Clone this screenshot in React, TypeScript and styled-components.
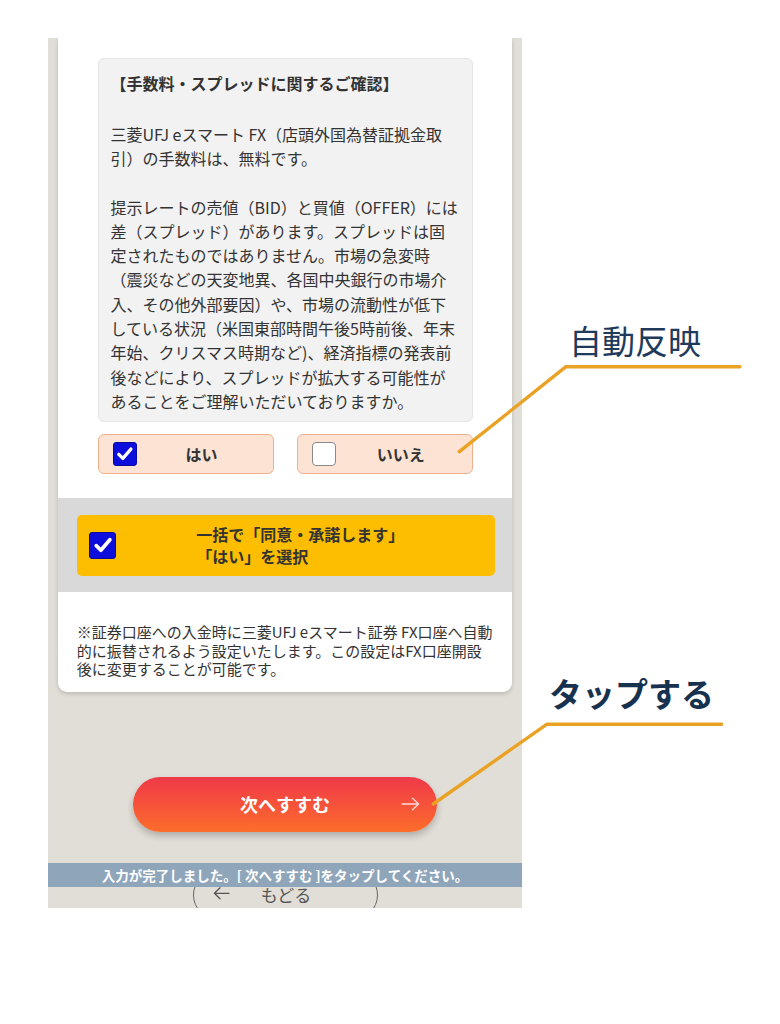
import React from "react";
import styled, { createGlobalStyle } from "styled-components";

const Global = createGlobalStyle`
  html, body { margin: 0; padding: 0; background: #ffffff; }
  body { font-family: "Noto Sans CJK JP", "Noto Sans", sans-serif; color: #333; }
  * { box-sizing: border-box; }
`;

const Page = styled.div`
  position: relative;
  width: 780px;
  height: 1024px;
  overflow: hidden;
  background: #ffffff;
  padding: 38px 0 0 48px;
`;

const Phone = styled.div`
  position: relative;
  width: 474px;
  height: 870px;
  overflow: hidden;
  background: #e1ddd7;
  display: flex;
  flex-direction: column;
  align-items: center;
  & > * { flex-shrink: 0; }
`;

const Card = styled.div`
  align-self: stretch;
  margin: 0 10px;
  background: #ffffff;
  border-radius: 0 0 9px 9px;
  box-shadow: 0 2px 4px rgba(0, 0, 0, 0.16);
  display: flex;
  flex-direction: column;
`;

const CardTop = styled.div`
  padding: 20px 39px 24px 39.5px;
  display: flex;
  flex-direction: column;
`;

const InfoBox = styled.div`
  background: #f2f2f2;
  border: 1px solid #e6e6e6;
  border-radius: 6px;
  padding: 12px 12px 8px 12px;
  font-size: 16px;
  line-height: 24.3px;
  color: #333;
  white-space: nowrap;
`;

const InfoTitle = styled.div`
  font-weight: 700;
  margin-bottom: 26.4px;
`;

const InfoText = styled.div``;

const Blank = styled.div`
  height: 24.3px;
`;

const ChoiceRow = styled.div`
  margin-top: 12px;
  display: flex;
  gap: 23px;
`;

const Choice = styled.div`
  flex: 1;
  height: 40px;
  background: #fde3d4;
  border: 1px solid #efb18c;
  border-radius: 6px;
  display: flex;
  align-items: center;
  padding: 0 6px 0 14px;
`;

const ChoiceLabel = styled.span`
  flex: 1;
  text-align: center;
  font-size: 16px;
  font-weight: 700;
  color: #333;
`;

const Box = styled.span<{ $checked: boolean; $size: number }>`
  flex: none;
  width: ${(p) => p.$size}px;
  height: ${(p) => p.$size}px;
  border-radius: ${(p) => (p.$checked ? 3 : 4)}px;
  background: ${(p) => (p.$checked ? "#0d0ddc" : "#ffffff")};
  border: ${(p) => (p.$checked ? "1px solid #0a0a9a" : "1.5px solid #8a8a8a")};
  display: flex;
  align-items: center;
  justify-content: center;
`;

const Check = ({ checked, size }: { checked: boolean; size: number }) => (
  <Box $checked={checked} $size={size}>
    {checked && (
      <svg width={size * 0.82} height={size * 0.82} viewBox="0 0 24 24">
        <path
          d="M4.6 12.6 L9.6 17.6 L19.4 6.2"
          fill="none"
          stroke="#ffffff"
          strokeWidth="4"
          strokeLinecap="round"
          strokeLinejoin="round"
        />
      </svg>
    )}
  </Box>
);

const BulkBand = styled.div`
  background: #d9d9d9;
  padding: 16.7px 17px 16.7px 18.7px;
`;

const BulkBox = styled.div`
  height: 60.6px;
  background: #fdbd00;
  border-radius: 5px;
  display: flex;
  align-items: center;
  padding-left: 12.6px;
`;

const BulkText = styled.div`
  margin-left: 80px;
  font-size: 16px;
  font-weight: 700;
  line-height: 22.7px;
  color: #333;
`;

const Note = styled.div`
  padding: 31px 18px 14px 18.7px;
  font-size: 15px;
  line-height: 18.3px;
  color: #333;
  white-space: nowrap;
`;

const NextButton = styled.div`
  position: relative;
  margin-top: 85px;
  width: 304px;
  height: 54.5px;
  border-radius: 28px;
  background: linear-gradient(180deg, #ef3949 0%, #f6523a 50%, #fd6d2a 100%);
  box-shadow: 0 4px 7px rgba(0, 0, 0, 0.22);
  display: flex;
  align-items: center;
  justify-content: center;
  color: #ffffff;
  font-size: 18px;
  font-weight: 700;
`;

const NextArrow = styled.span`
  position: absolute;
  right: 17px;
  top: 50%;
  transform: translateY(-50%);
  display: flex;
`;

const BackButton = styled.div`
  position: relative;
  margin-top: 38px;
  width: 185px;
  height: 50px;
  border: 1.4px solid #666;
  border-radius: 25px;
  display: flex;
  align-items: center;
  justify-content: center;
  font-size: 17px;
  color: #555;
  padding-left: 2px;
`;

const BackArrow = styled.span`
  position: absolute;
  left: 19px;
  top: 50%;
  transform: translateY(-62%);
  display: flex;
`;

const StatusBar = styled.div`
  position: absolute;
  left: 0;
  right: 0;
  top: 825px;
  height: 24px;
  background: #8ea5ba;
  color: #ffffff;
  font-size: 13.5px;
  font-weight: 700;
  line-height: 24px;
  text-align: center;
  white-space: nowrap;
`;

const Overlay = styled.svg`
  position: absolute;
  left: 0;
  top: 0;
  pointer-events: none;
`;

const Callout = styled.div<{ $x: number; $y: number; $bold?: boolean }>`
  position: absolute;
  left: ${(p) => p.$x}px;
  top: ${(p) => p.$y}px;
  font-size: 33px;
  line-height: 33px;
  font-weight: ${(p) => (p.$bold ? 700 : 400)};
  color: ${(p) => (p.$bold ? "#17324f" : "#1f3a5b")};
  white-space: nowrap;
`;

export default function App() {
  return (
    <>
      <Global />
      <Page>
        <Phone>
          <Card>
            <CardTop>
              <InfoBox>
                <InfoTitle>【手数料・スプレッドに関するご確認】</InfoTitle>
                <InfoText>
                  三菱UFJ eスマート FX（店頭外国為替証拠金取
                  <br />
                  引）の手数料は、無料です。
                </InfoText>
                <Blank />
                <InfoText>
                  提示レートの売値（BID）と買値（OFFER）には
                  <br />
                  差（スプレッド）があります。スプレッドは固
                  <br />
                  定されたものではありません。市場の急変時
                  <br />
                  （震災などの天変地異、各国中央銀行の市場介
                  <br />
                  入、その他外部要因）や、市場の流動性が低下
                  <br />
                  している状況（米国東部時間午後5時前後、年末
                  <br />
                  年始、クリスマス時期など)、経済指標の発表前
                  <br />
                  後などにより、スプレッドが拡大する可能性が
                  <br />
                  あることをご理解いただいておりますか。
                </InfoText>
              </InfoBox>
              <ChoiceRow>
                <Choice>
                  <Check checked size={24} />
                  <ChoiceLabel>はい</ChoiceLabel>
                </Choice>
                <Choice>
                  <Check checked={false} size={24} />
                  <ChoiceLabel>いいえ</ChoiceLabel>
                </Choice>
              </ChoiceRow>
            </CardTop>
            <BulkBand>
              <BulkBox>
                <Check checked size={27} />
                <BulkText>
                  一括で「同意・承諾します」
                  <br />
                  「はい」を選択
                </BulkText>
              </BulkBox>
            </BulkBand>
            <Note>
              ※証券口座への入金時に三菱UFJ eスマート証券 FX口座へ自動
              <br />
              的に振替されるよう設定いたします。この設定はFX口座開設
              <br />
              後に変更することが可能です。
            </Note>
          </Card>
          <NextButton>
            次へすすむ
            <NextArrow>
              <svg width="19" height="14" viewBox="0 0 19 14">
                <path
                  d="M1 7 H17.5 M11.5 1.2 L17.6 7 L11.5 12.8"
                  fill="none"
                  stroke="rgba(255,255,255,0.8)"
                  strokeWidth="1.3"
                  strokeLinecap="round"
                  strokeLinejoin="round"
                />
              </svg>
            </NextArrow>
          </NextButton>
          <BackButton>
            <BackArrow>
              <svg width="17" height="14" viewBox="0 0 17 14">
                <path
                  d="M16 7 H1.5 M7 1.5 L1.4 7 L7 12.5"
                  fill="none"
                  stroke="#555"
                  strokeWidth="1.3"
                  strokeLinecap="round"
                  strokeLinejoin="round"
                />
              </svg>
            </BackArrow>
            もどる
          </BackButton>
          <StatusBar>入力が完了しました。[ 次へすすむ ]をタップしてください。</StatusBar>
        </Phone>
        <Callout $x={569} $y={323.5}>
          自動反映
        </Callout>
        <Callout $x={549} $y={676.5} $bold>
          タップする
        </Callout>
        <Overlay width="780" height="1024" viewBox="0 0 780 1024">
          <polyline
            points="740,366.7 566,366.7 459.3,451.7"
            fill="none"
            stroke="#eaa224"
            strokeWidth="3.4"
            strokeLinecap="round"
            strokeLinejoin="round"
          />
          <polyline
            points="721.7,724.3 546.7,724.3 433.3,804"
            fill="none"
            stroke="#eaa224"
            strokeWidth="3.4"
            strokeLinecap="round"
            strokeLinejoin="round"
          />
        </Overlay>
      </Page>
    </>
  );
}
